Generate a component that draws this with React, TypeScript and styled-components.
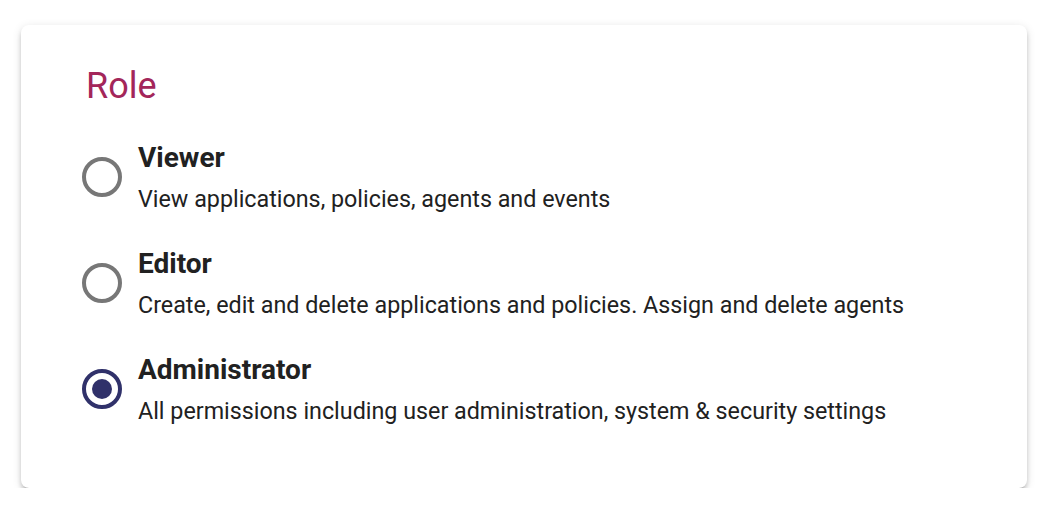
import React, { useState } from "react";
import styled, { createGlobalStyle } from "styled-components";

interface RoleOption {
  value: string;
  label: string;
  description: string;
}

const roles: RoleOption[] = [
  {
    value: "viewer",
    label: "Viewer",
    description: "View applications, policies, agents and events",
  },
  {
    value: "editor",
    label: "Editor",
    description:
      "Create, edit and delete applications and policies. Assign and delete agents",
  },
  {
    value: "admin",
    label: "Administrator",
    description:
      "All permissions including user administration, system & security settings",
  },
];

const App: React.FC = () => {
  const [role, setRole] = useState("admin");

  return (
    <>
      <GlobalStyle />
      <StyledPage>
        <StyledCard>
          <StyledHeading>Role</StyledHeading>
          <StyledOptions role="radiogroup">
            {roles.map((item) => (
              <StyledOption key={item.value}>
                <StyledInput
                  type="radio"
                  name="role"
                  value={item.value}
                  checked={role === item.value}
                  onChange={() => setRole(item.value)}
                />
                <StyledCircle $checked={role === item.value} />
                <StyledText>
                  <StyledLabel>{item.label}</StyledLabel>
                  <StyledDescription>{item.description}</StyledDescription>
                </StyledText>
              </StyledOption>
            ))}
          </StyledOptions>
        </StyledCard>
      </StyledPage>
    </>
  );
};

export default App;

const GlobalStyle = createGlobalStyle`
  body {
    margin: 0;
    background: #ffffff;
    font-family: Roboto, "Liberation Sans", sans-serif;
  }
`;

const StyledPage = styled.div`
  padding: 25px 25px 0 21px;
`;

const StyledCard = styled.div`
  width: 1006px;
  box-sizing: border-box;
  padding: 39px 40px 62px 60px;
  background: #ffffff;
  border-radius: 8px;
  box-shadow: 0 6px 2px -4px rgba(0, 0, 0, 0.24), 0 4px 4px 0 rgba(0, 0, 0, 0.16),
    0 2px 10px 0 rgba(0, 0, 0, 0.12);
`;

const StyledHeading = styled.h2`
  margin: 0 0 32px 5px;
  font-size: 36px;
  line-height: 44px;
  font-weight: 400;
  color: #a3265a;
`;

const StyledOptions = styled.div`
  display: flex;
  flex-direction: column;
  gap: 32px;
`;

const StyledOption = styled.label`
  display: flex;
  align-items: center;
  gap: 16px;
  cursor: pointer;
`;

const StyledInput = styled.input`
  position: absolute;
  opacity: 0;
  width: 0;
  height: 0;
  margin: 0;
`;

const StyledCircle = styled.span<{ $checked: boolean }>`
  flex: none;
  width: 40px;
  height: 40px;
  box-sizing: border-box;
  border-radius: 50%;
  border: 4px solid ${(p) => (p.$checked ? "#30316a" : "#777777")};
  display: flex;
  align-items: center;
  justify-content: center;
  margin-left: 1px;

  &::after {
    content: "";
    width: 20px;
    height: 20px;
    border-radius: 50%;
    background: #30316a;
    display: ${(p) => (p.$checked ? "block" : "none")};
  }
`;

const StyledText = styled.div`
  display: flex;
  flex-direction: column;
  gap: 8px;
`;

const StyledLabel = styled.span`
  font-size: 28px;
  line-height: 36px;
  font-weight: 700;
  color: #212121;
`;

const StyledDescription = styled.span`
  font-size: 23.3px;
  line-height: 30px;
  color: #212121;
`;
